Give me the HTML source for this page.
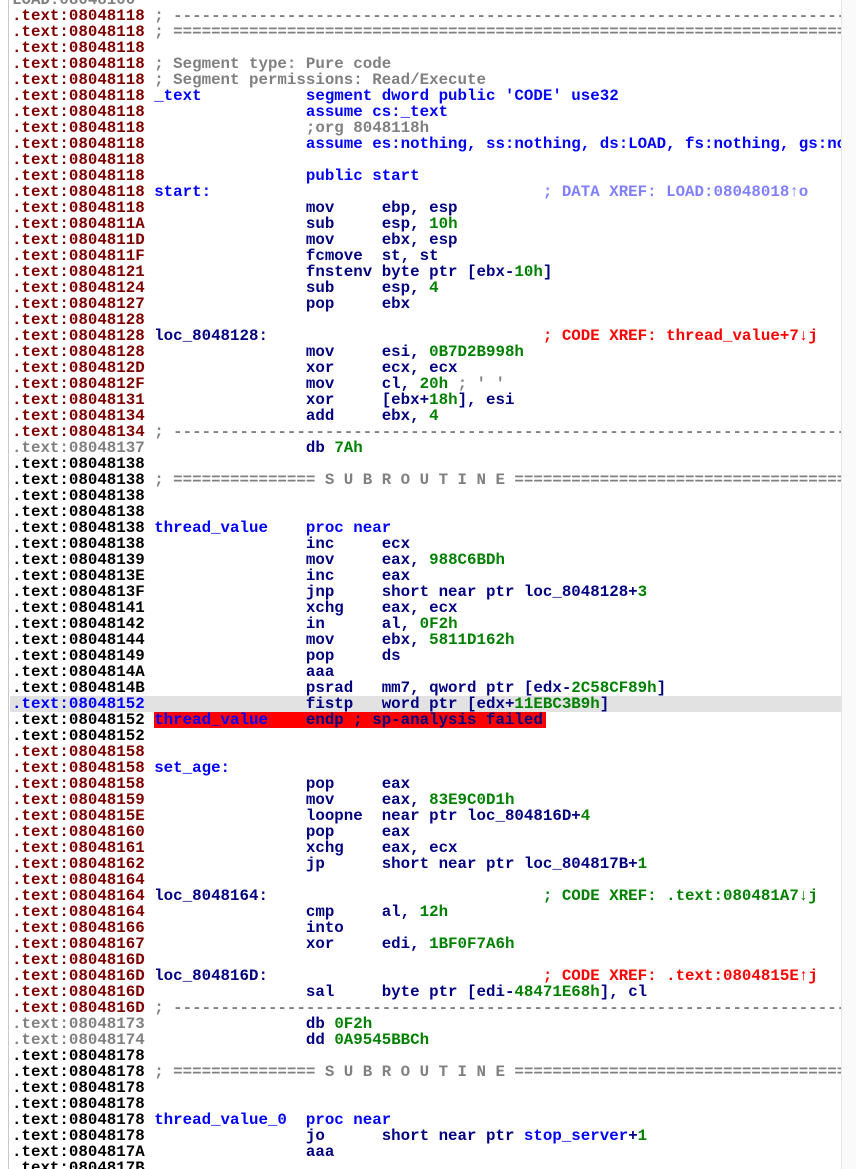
<!DOCTYPE html>
<html><head><meta charset="utf-8"><style>
html,body{margin:0;padding:0;background:#fff;width:856px;height:1169px;overflow:hidden}
#v{position:absolute;left:0;top:0;width:841px;height:1169px;overflow:hidden}
#bl{position:absolute;left:8px;top:0;width:1px;height:1169px;background:#c8c8c8}
#sb{position:absolute;left:841px;top:0;width:15px;height:1169px;background:#fafafa;border-left:1px solid #e6e6e6}
#th{position:absolute;left:845px;top:110px;width:7px;height:17px;border-radius:4px;background:#c2c2c2}
.ln{position:absolute;left:12px;height:16px;width:840px;font:bold 15.8px/16px "Liberation Mono",monospace;white-space:pre;color:#000080}
.ln span{position:absolute;top:0}
.a{left:0;color:#800000}.ak{left:0;color:#000}.ag{left:0;color:#808080}.ab{left:0;color:#0000ff}
.l{left:15ch;color:#0000ff}
.m{left:31ch;color:#000080}
.o{left:39ch;color:#000080}
.c{left:15ch;color:#808080}
.x{left:56ch}
.n{position:static!important;color:#008000}
.b{position:static!important;color:#0000ff}
.g{position:static!important;color:#808080}
.tk{position:absolute;left:0;width:3px;height:2px;background:#8ecfe6}
</style></head><body>
<div id="v">
<div id="bl"></div>
<div style="position:absolute;left:10px;top:696px;width:831px;height:16px;background:#e2e2e2"></div>
<div style="position:absolute;left:154px;top:712px;width:392px;height:16px;background:#ff0000"></div>

<div class="ln" style="top:-8px"><span class="ag">LOAD:08048100</span></div>
<div class="ln" style="top:8px"><span class="a">.text:08048118</span><span class="c">; -------------------------------------------------------------------------------------</span></div>
<div class="ln" style="top:24px"><span class="a">.text:08048118</span><span class="c">; =====================================================================================</span></div>
<div class="ln" style="top:40px"><span class="a">.text:08048118</span></div>
<div class="ln" style="top:56px"><span class="a">.text:08048118</span><span class="c">; Segment type: Pure code</span></div>
<div class="ln" style="top:72px"><span class="a">.text:08048118</span><span class="c">; Segment permissions: Read/Execute</span></div>
<div class="ln" style="top:88px"><span class="a">.text:08048118</span><span class="l">_text</span><span class="m" style="color:#0000ff">segment dword public 'CODE' use32</span></div>
<div class="ln" style="top:104px"><span class="a">.text:08048118</span><span class="m" style="color:#0000ff">assume cs:_text</span></div>
<div class="ln" style="top:120px"><span class="a">.text:08048118</span><span class="m" style="color:#808080">;org 8048118h</span></div>
<div class="ln" style="top:136px"><span class="a">.text:08048118</span><span class="m" style="color:#0000ff">assume es:nothing, ss:nothing, ds:LOAD, fs:nothing, gs:nothing</span></div>
<div class="ln" style="top:152px"><span class="a">.text:08048118</span></div>
<div class="ln" style="top:168px"><span class="a">.text:08048118</span><span class="m" style="color:#0000ff">public start</span></div>
<div class="ln" style="top:184px"><span class="a">.text:08048118</span><span class="l">start:</span><span class="x" style="color:#8080ff">; DATA XREF: LOAD:08048018↑o</span></div>
<div class="ln" style="top:200px"><span class="a">.text:08048118</span><span class="m">mov</span><span class="o">ebp, esp</span></div>
<div class="ln" style="top:216px"><span class="a">.text:0804811A</span><span class="m">sub</span><span class="o">esp, <span class="n">10h</span></span></div>
<div class="ln" style="top:232px"><span class="a">.text:0804811D</span><span class="m">mov</span><span class="o">ebx, esp</span></div>
<div class="ln" style="top:248px"><span class="a">.text:0804811F</span><span class="m">fcmove</span><span class="o">st, st</span></div>
<div class="ln" style="top:264px"><span class="a">.text:08048121</span><span class="m">fnstenv byte ptr [ebx-<span class="n">10h</span>]</span></div>
<div class="ln" style="top:280px"><span class="a">.text:08048124</span><span class="m">sub</span><span class="o">esp, <span class="n">4</span></span></div>
<div class="ln" style="top:296px"><span class="a">.text:08048127</span><span class="m">pop</span><span class="o">ebx</span></div>
<div class="ln" style="top:312px"><span class="a">.text:08048128</span></div>
<div class="ln" style="top:328px"><span class="a">.text:08048128</span><span class="l" style="color:#000080">loc_8048128:</span><span class="x" style="color:#ff0000">; CODE XREF: thread_value+7↓j</span></div>
<div class="ln" style="top:344px"><span class="a">.text:08048128</span><span class="m">mov</span><span class="o">esi, <span class="n">0B7D2B998h</span></span></div>
<div class="ln" style="top:360px"><span class="a">.text:0804812D</span><span class="m">xor</span><span class="o">ecx, ecx</span></div>
<div class="ln" style="top:376px"><span class="a">.text:0804812F</span><span class="m">mov</span><span class="o">cl, <span class="n">20h</span> <span class="g">; ' '</span></span></div>
<div class="ln" style="top:392px"><span class="a">.text:08048131</span><span class="m">xor</span><span class="o">[ebx+<span class="n">18h</span>], esi</span></div>
<div class="ln" style="top:408px"><span class="a">.text:08048134</span><span class="m">add</span><span class="o">ebx, <span class="n">4</span></span></div>
<div class="ln" style="top:424px"><span class="a">.text:08048134</span><span class="c">; -------------------------------------------------------------------------------------</span></div>
<div class="ln" style="top:440px"><span class="ag">.text:08048137</span><span class="m">db <span class="n">7Ah</span></span></div>
<div class="ln" style="top:456px"><span class="ak">.text:08048138</span></div>
<div class="ln" style="top:472px"><span class="ak">.text:08048138</span><span class="c">; =============== S U B R O U T I N E =======================================================</span></div>
<div class="ln" style="top:488px"><span class="ak">.text:08048138</span></div>
<div class="ln" style="top:504px"><span class="ak">.text:08048138</span></div>
<div class="ln" style="top:520px"><span class="ak">.text:08048138</span><span class="l">thread_value</span><span class="m" style="color:#0000ff">proc near</span></div>
<div class="ln" style="top:536px"><span class="ak">.text:08048138</span><span class="m">inc</span><span class="o">ecx</span></div>
<div class="ln" style="top:552px"><span class="ak">.text:08048139</span><span class="m">mov</span><span class="o">eax, <span class="n">988C6BDh</span></span></div>
<div class="ln" style="top:568px"><span class="ak">.text:0804813E</span><span class="m">inc</span><span class="o">eax</span></div>
<div class="ln" style="top:584px"><span class="ak">.text:0804813F</span><span class="m">jnp</span><span class="o">short near ptr loc_8048128+<span class="n">3</span></span></div>
<div class="ln" style="top:600px"><span class="ak">.text:08048141</span><span class="m">xchg</span><span class="o">eax, ecx</span></div>
<div class="ln" style="top:616px"><span class="ak">.text:08048142</span><span class="m">in</span><span class="o">al, <span class="n">0F2h</span></span></div>
<div class="ln" style="top:632px"><span class="ak">.text:08048144</span><span class="m">mov</span><span class="o">ebx, <span class="n">5811D162h</span></span></div>
<div class="ln" style="top:648px"><span class="ak">.text:08048149</span><span class="m">pop</span><span class="o">ds</span></div>
<div class="ln" style="top:664px"><span class="ak">.text:0804814A</span><span class="m">aaa</span></div>
<div class="ln" style="top:680px"><span class="ak">.text:0804814B</span><span class="m">psrad</span><span class="o">mm7, qword ptr [edx-<span class="n">2C58CF89h</span>]</span></div>
<div class="ln" style="top:696px"><span class="ab">.text:08048152</span><span class="m">fistp</span><span class="o">word ptr [edx+<span class="n">11EBC3B9h</span>]</span></div>
<div class="ln" style="top:712px"><span class="ak">.text:08048152</span><span class="l">thread_value</span><span class="m">endp ; sp-analysis failed</span></div>
<div class="ln" style="top:728px"><span class="ak">.text:08048152</span></div>
<div class="ln" style="top:744px"><span class="a">.text:08048158</span></div>
<div class="ln" style="top:760px"><span class="a">.text:08048158</span><span class="l">set_age:</span></div>
<div class="ln" style="top:776px"><span class="a">.text:08048158</span><span class="m">pop</span><span class="o">eax</span></div>
<div class="ln" style="top:792px"><span class="a">.text:08048159</span><span class="m">mov</span><span class="o">eax, <span class="n">83E9C0D1h</span></span></div>
<div class="ln" style="top:808px"><span class="a">.text:0804815E</span><span class="m">loopne</span><span class="o">near ptr loc_804816D+<span class="n">4</span></span></div>
<div class="ln" style="top:824px"><span class="a">.text:08048160</span><span class="m">pop</span><span class="o">eax</span></div>
<div class="ln" style="top:840px"><span class="a">.text:08048161</span><span class="m">xchg</span><span class="o">eax, ecx</span></div>
<div class="ln" style="top:856px"><span class="a">.text:08048162</span><span class="m">jp</span><span class="o">short near ptr loc_804817B+<span class="n">1</span></span></div>
<div class="ln" style="top:872px"><span class="a">.text:08048164</span></div>
<div class="ln" style="top:888px"><span class="a">.text:08048164</span><span class="l" style="color:#000080">loc_8048164:</span><span class="x" style="color:#008000">; CODE XREF: .text:080481A7↓j</span></div>
<div class="ln" style="top:904px"><span class="a">.text:08048164</span><span class="m">cmp</span><span class="o">al, <span class="n">12h</span></span></div>
<div class="ln" style="top:920px"><span class="a">.text:08048166</span><span class="m">into</span></div>
<div class="ln" style="top:936px"><span class="a">.text:08048167</span><span class="m">xor</span><span class="o">edi, <span class="n">1BF0F7A6h</span></span></div>
<div class="ln" style="top:952px"><span class="a">.text:0804816D</span></div>
<div class="ln" style="top:968px"><span class="a">.text:0804816D</span><span class="l" style="color:#000080">loc_804816D:</span><span class="x" style="color:#ff0000">; CODE XREF: .text:0804815E↑j</span></div>
<div class="ln" style="top:984px"><span class="a">.text:0804816D</span><span class="m">sal</span><span class="o">byte ptr [edi-<span class="n">48471E68h</span>], cl</span></div>
<div class="ln" style="top:1000px"><span class="a">.text:0804816D</span><span class="c">; -------------------------------------------------------------------------------------</span></div>
<div class="ln" style="top:1016px"><span class="ag">.text:08048173</span><span class="m">db <span class="n">0F2h</span></span></div>
<div class="ln" style="top:1032px"><span class="ag">.text:08048174</span><span class="m">dd <span class="n">0A9545BBCh</span></span></div>
<div class="ln" style="top:1048px"><span class="ak">.text:08048178</span></div>
<div class="ln" style="top:1064px"><span class="ak">.text:08048178</span><span class="c">; =============== S U B R O U T I N E =======================================================</span></div>
<div class="ln" style="top:1080px"><span class="ak">.text:08048178</span></div>
<div class="ln" style="top:1096px"><span class="ak">.text:08048178</span></div>
<div class="ln" style="top:1112px"><span class="ak">.text:08048178</span><span class="l">thread_value_0</span><span class="m" style="color:#0000ff">proc near</span></div>
<div class="ln" style="top:1128px"><span class="ak">.text:08048178</span><span class="m">jo</span><span class="o">short near ptr <span class="b">stop_server</span>+<span class="n">1</span></span></div>
<div class="ln" style="top:1144px"><span class="ak">.text:0804817A</span><span class="m">aaa</span></div>
<div class="ln" style="top:1160px"><span class="ak">.text:0804817B</span></div>
</div>
<div id="sb"><div id="th"></div></div>
</body></html>
